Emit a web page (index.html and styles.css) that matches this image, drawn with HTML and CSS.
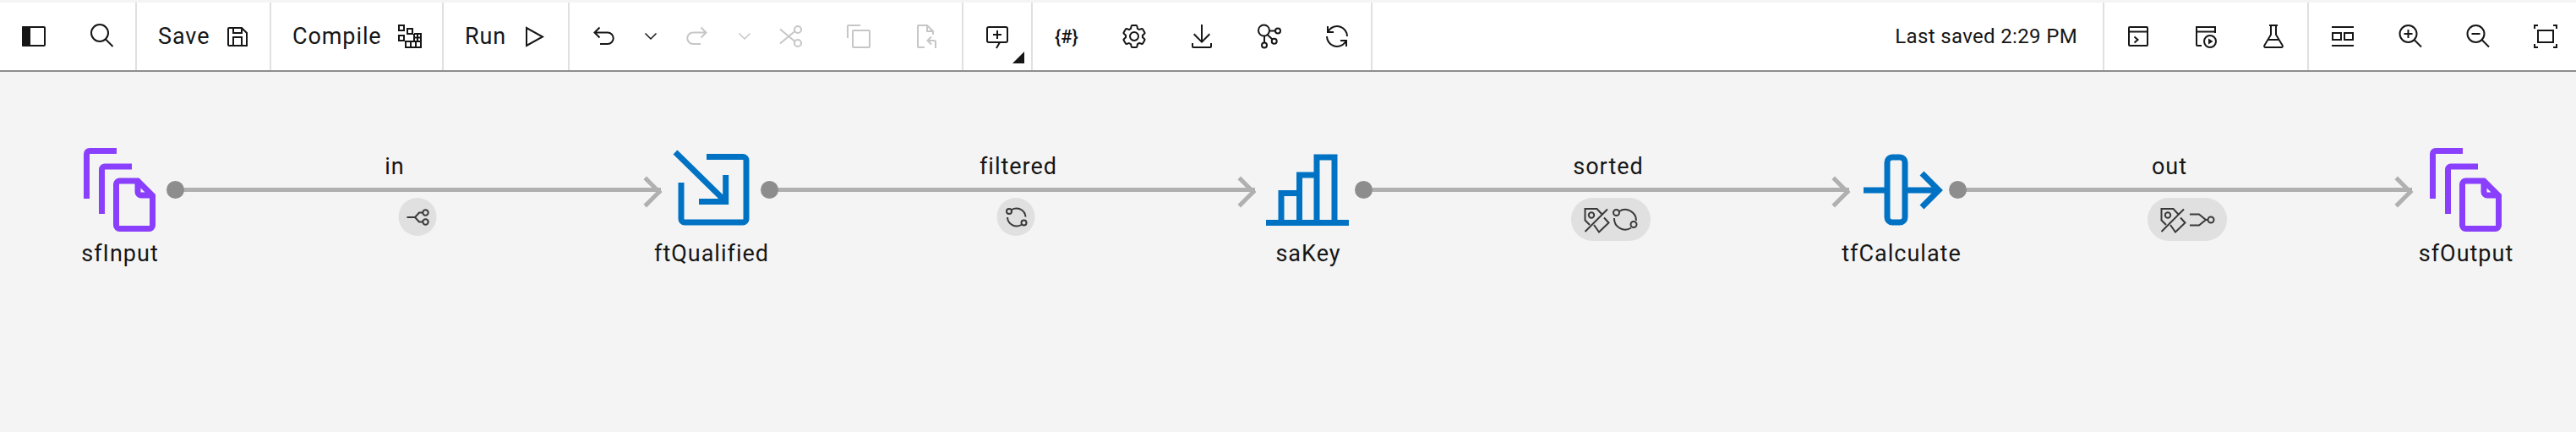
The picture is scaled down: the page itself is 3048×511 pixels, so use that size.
FILE: index.html
```html
<!DOCTYPE html>
<html lang="en">
<head>
  <meta charset="UTF-8" />
  <title>Flow canvas</title>
  <link rel="stylesheet" href="styles.css">
</head>
<body>
  <div class="toolbar">
    <div class="group g-side">
      <button class="tool"><svg viewBox="0 0 32 32"><rect x="3" y="5" width="26" height="22" rx="1"/><path class="solid" d="M3 4h9v24H3a1 1 0 0 1-1-1V5a1 1 0 0 1 1-1z"/></svg></button>
      <button class="tool"><svg viewBox="0 0 32 32"><circle cx="14" cy="12" r="10"/><path d="m21 19.500 8.500 8.500"/></svg></button>
    </div>
    <div class="group g-save">
      <button class="tool text">Save <svg viewBox="0 0 32 32"><path d="M6 6h15l6 6v15H6a1 1 0 0 1-1-1V7a1 1 0 0 1 1-1z"/><path d="M11 6v6h10V6M11 27V17h10v10"/></svg></button>
    </div>
    <div class="group g-compile">
      <button class="tool text">Compile <svg viewBox="0 0 32 32"><path d="M3 3h6v6H3zM13 7h6v6h-6zM3 15h6v6H3zM11 22h18v7H11zM21 13h8v9M17 22v7M23 22v7M25 13v9M21 13v9M21 17.500h8"/></svg></button>
    </div>
    <div class="group g-run">
      <button class="tool text">Run <svg viewBox="0 0 32 32"><path d="M7 6v21l19-10.500z"/></svg></button>
    </div>
    <div class="group g-edit">
      <button class="tool"><svg viewBox="0 0 32 32"><path d="M6 11.500h15a6.750 6.750 0 0 1 0 13.500h-9M11.500 5.500l-6 6 6 6"/></svg></button>
      <button class="caret"><svg viewBox="0 0 16 16"><path d="M1.500 4.500 8 11l6.500-6.500"/></svg></button>
      <button class="tool off"><svg viewBox="0 0 32 32"><path d="M26 11.500H11a6.750 6.750 0 0 0 0 13.500h9M20.500 5.500l6 6-6 6"/></svg></button>
      <button class="caret off"><svg viewBox="0 0 16 16"><path d="M1.500 4.500 8 11l6.500-6.500"/></svg></button>
      <button class="tool off"><svg viewBox="0 0 32 32"><circle cx="24" cy="8" r="4"/><circle cx="24" cy="24" r="4"/><path d="M3 7.500 20.500 22M3 24.500 20.500 10"/></svg></button>
      <button class="tool off"><svg viewBox="0 0 32 32"><rect x="9" y="9" width="20" height="20" rx="1"/><path d="M3 18V4a1 1 0 0 1 1-1h14"/></svg></button>
      <button class="tool off"><svg viewBox="0 0 32 32"><path d="M14 29H7a1 1 0 0 1-1-1V4a1 1 0 0 1 1-1h10l7 7v4M17 3v7h7M27 30v-7a2 2 0 0 0-2-2h-7M22 16.500 17.500 21l4.500 4.500"/></svg></button>
    </div>
    <div class="group g-note">
      <button class="tool"><svg viewBox="0 0 32 32"><path d="M19 23h7a2 2 0 0 0 2-2V7a2 2 0 0 0-2-2H6a2 2 0 0 0-2 2v14a2 2 0 0 0 2 2h13l-4 7M16 9v10M11 14h10"/></svg></button>
      <span class="corner"></span>
    </div>
    <div class="group g-more">
      <button class="tool"><span class="hash">{#}</span></button>
      <button class="tool"><svg class="solid" viewBox="0 0 32 32"><path d="M27 16.760c0-.25 0-.5 0-.76s0-.51 0-.77l1.920-1.680A2 2 0 0 0 29.300 11l-2.360-4a2 2 0 0 0-1.730-1 2 2 0 0 0-.64.1l-2.430.82a11.350 11.350 0 0 0-1.310-.75l-.51-2.520a2 2 0 0 0-2-1.610h-4.680a2 2 0 0 0-2 1.610l-.51 2.520a11.480 11.480 0 0 0-1.320.75l-2.380-.86A2 2 0 0 0 6.790 6a2 2 0 0 0-1.730 1L2.700 11a2 2 0 0 0 .41 2.510L5 15.240c0 .25 0 .5 0 .76s0 .51 0 .77l-1.890 1.680A2 2 0 0 0 2.700 21l2.360 4a2 2 0 0 0 1.730 1 2 2 0 0 0 .64-.1l2.430-.82a11.350 11.350 0 0 0 1.310.75l.51 2.520a2 2 0 0 0 2 1.610h4.720a2 2 0 0 0 2-1.610l.51-2.520a11.480 11.480 0 0 0 1.320-.75l2.420.82a2 2 0 0 0 .64.1 2 2 0 0 0 1.730-1l2.280-4a2 2 0 0 0-.41-2.510ZM25.210 24l-3.430-1.160a8.860 8.860 0 0 1-2.710 1.570L18.360 28h-4.720l-.71-3.550a9.360 9.360 0 0 1-2.700-1.570L6.790 24l-2.360-4 2.720-2.400a8.900 8.900 0 0 1 0-3.130L4.430 12l2.360-4 3.430 1.160a8.860 8.860 0 0 1 2.710-1.570L13.640 4h4.720l.71 3.550a9.360 9.360 0 0 1 2.700 1.570L25.210 8l2.360 4-2.720 2.400a8.900 8.900 0 0 1 0 3.130L27.570 20Z"/><path d="M16 22a6 6 0 1 1 6-6 5.940 5.940 0 0 1-6 6Zm0-10a3.910 3.910 0 0 0-4 4 3.910 3.910 0 0 0 4 4 3.910 3.910 0 0 0 4-4 3.910 3.910 0 0 0-4-4Z"/></svg></button>
      <button class="tool"><svg class="solid" viewBox="0 0 32 32"><path d="M26 24v4H6v-4H4v4a2 2 0 0 0 2 2h20a2 2 0 0 0 2-2v-4z"/><path d="m26 14-1.410-1.410L17 20.170V2h-2v18.170l-7.590-7.580L6 14l10 10 10-10z"/></svg></button>
      <button class="tool"><svg viewBox="0 0 32 32"><circle cx="9.500" cy="9" r="6.500"/><circle cx="26" cy="9.500" r="3"/><circle cx="21.700" cy="21.700" r="3"/><circle cx="10" cy="26.500" r="3"/><path d="M16 9.500h7M13.500 14l6 5.500M10 15.500v8"/></svg></button>
      <button class="tool"><svg class="solid" viewBox="0 0 32 32"><path d="M12 10H6.780A11 11 0 0 1 27 16h2A13 13 0 0 0 6 7.680V4H4v8h8zM20 22h5.220A11 11 0 0 1 5 16H3a13 13 0 0 0 23 8.320V28h2v-8h-8z"/></svg></button>
    </div>
    <div class="status">Last saved 2:29 PM</div>
    <div class="group g-panel">
      <button class="tool"><svg viewBox="0 0 32 32"><rect x="5" y="5" width="22" height="22" rx="1"/><path d="M5 10.500h22M11.500 16.500l4 3.500-4 3.500"/></svg></button>
      <button class="tool"><svg viewBox="0 0 32 32"><path d="M11 27H6a1 1 0 0 1-1-1V5h22v7M5 10.500h22"/><circle cx="21" cy="22" r="7"/><path class="solid" d="m19 18.500 5.500 3.500-5.500 3.500z"/></svg></button>
      <button class="tool"><svg viewBox="0 0 32 32"><path d="M11 3h10M13 3v11L5.500 26.500A1.500 1.500 0 0 0 7 29h18a1.500 1.500 0 0 0 1.500-2.500L19 14V3M9.500 20h13"/></svg></button>
    </div>
    <div class="group g-view">
      <button class="tool"><svg viewBox="0 0 32 32"><path d="M3 5h26M3 27h26M4 12h10v8H4zM18 12h10v8H18z"/></svg></button>
      <button class="tool"><svg viewBox="0 0 32 32"><circle cx="13.500" cy="13" r="10"/><path d="m20.500 20 8.500 8.500M13.500 8v10M8.500 13h10"/></svg></button>
      <button class="tool"><svg viewBox="0 0 32 32"><circle cx="13.500" cy="13" r="10"/><path d="m20.500 20 8.500 8.500M8.500 13h10"/></svg></button>
      <button class="tool"><svg viewBox="0 0 32 32"><path d="M3 7V3h4M25 3h4v4M3 25v4h4M25 29h4v-4M7 9h18v14H7z"/></svg></button>
    </div>
  </div>

  <div class="canvas">
    <div class="link link-in">
      <span class="link-label">in</span>
      <span class="badge"><svg viewBox="0 0 32 32"><path d="M3 16h9.500l5-5.500h4M12.500 16l5 5.500h4"/><circle cx="25" cy="10.500" r="3.200"/><circle cx="25" cy="21.500" r="3.200"/></svg></span>
    </div>
    <div class="link link-filtered">
      <span class="link-label">filtered</span>
      <span class="badge"><svg viewBox="0 0 32 32"><circle cx="7.500" cy="9" r="3"/><circle cx="25" cy="22.500" r="3"/><path d="M10.500 7A11 11 0 0 1 27 15.500M22 25a11 11 0 0 1-16.500-9"/></svg></span>
    </div>
    <div class="link link-sorted">
      <span class="link-label">sorted</span>
      <span class="badge wide"><svg viewBox="0 0 32 32"><path d="M23 10 16.500 3H2.500v13.500L8 22M2.500 30 29 3.500M13 22l6 8.500 11.500-11L25 13.500"/><circle cx="10" cy="10.500" r="3.200"/></svg><svg viewBox="0 0 32 32"><circle cx="5.500" cy="7.500" r="3.500"/><circle cx="26" cy="21.500" r="3.500"/><path d="M9 6a13 13 0 0 1 20 11M23 25.500A13 13 0 0 1 3 14"/></svg></span>
    </div>
    <div class="link link-out">
      <span class="link-label">out</span>
      <span class="badge wide"><svg viewBox="0 0 32 32"><path d="M23 10 16.500 3H2.500v13.500L8 22M2.500 30 29 3.500M13 22l6 8.500 11.500-11L25 13.500"/><circle cx="10" cy="10.500" r="3.200"/></svg><svg viewBox="0 0 32 32"><path d="M2 9.500h11l8 6.500-8 6.500H2M21 16h2.500"/><circle cx="27" cy="16" r="3.500"/></svg></span>
    </div>

    <div class="node node-input">
      <svg class="node-icon purple" viewBox="0 0 100 100"><path d="M10.500 61V8a3.500 3.500 0 0 1 3.500-3.500h32M28.500 79V26.500a3.500 3.500 0 0 1 3.500-3.500h32M45.500 44a4 4 0 0 1 4-4H71L88.500 57.500v35a4 4 0 0 1-4 4h-35a4 4 0 0 1-4-4zM71 40v13a4 4 0 0 0 4 4h13.500"/></svg>
      <span class="node-label">sfInput</span>
    </div>
    <div class="node node-filter">
      <svg class="node-icon blue" viewBox="0 0 100 100"><path d="M44 11.500h43a4 4 0 0 1 4 4V85a4 4 0 0 1-4 4H18a4 4 0 0 1-4-4V42M7 6l59.700 58.500M35 64.500h31.700V33"/></svg>
      <span class="node-label">ftQualified</span>
    </div>
    <div class="node node-sort">
      <svg class="node-icon blue" viewBox="0 0 100 100"><path d="M0 89.500h98M18 89.500v-35h21.500M39.500 89.500V33H60M60 89.500V12h21v77.500"/></svg>
      <span class="node-label">saKey</span>
    </div>
    <div class="node node-calc">
      <svg class="node-icon blue" viewBox="0 0 100 100"><rect x="33" y="12" width="21" height="77" rx="6"/><path d="M5 51h28M54 51h41M74 31l20 20-20 20"/></svg>
      <span class="node-label">tfCalculate</span>
    </div>
    <div class="node node-output">
      <svg class="node-icon purple" viewBox="0 0 100 100"><path d="M10.500 61V8a3.500 3.500 0 0 1 3.500-3.500h32M28.500 79V26.500a3.500 3.500 0 0 1 3.500-3.500h32M45.500 44a4 4 0 0 1 4-4H71L88.500 57.500v35a4 4 0 0 1-4 4h-35a4 4 0 0 1-4-4zM71 40v13a4 4 0 0 0 4 4h13.500"/></svg>
      <span class="node-label">sfOutput</span>
    </div>
  </div>
</body>
</html>
```

FILE: styles.css
```css
* { box-sizing: border-box; }

html, body { height: 100%; }

body {
  margin: 0;
  padding-top: 3px;
  display: flex;
  flex-direction: column;
  overflow: hidden;
  background: #f4f4f4;
  color: #161616;
  font-family: Roboto, "Noto Sans", sans-serif;
}

/* toolbar */
.toolbar {
  display: flex;
  align-items: stretch;
  flex: none;
  height: 82px;
  background: #fff;
  border-bottom: 2px solid #8d8d8d;
}

.group {
  position: relative;
  display: flex;
  align-items: center;
  flex: none;
  border-right: 2px solid #e0e0e0;
}

.g-side { width: 162px; }
.g-save { width: 159px; padding-left: 25px; }
.g-compile { width: 204px; padding-left: 25px; }
.g-run { width: 149px; padding-left: 25px; }
.g-edit { width: 466px; }
.g-note { width: 82px; }
.g-more { width: 402px; }
.g-panel { width: 242px; }
.g-view { width: 316px; border-right: 0; }

.status {
  flex: 1;
  display: flex;
  align-items: center;
  justify-content: flex-end;
  padding-right: 30px;
  font-size: 24px;
  letter-spacing: 0.35px;
  border-right: 2px solid #e0e0e0;
}

.tool, .caret {
  display: flex;
  align-items: center;
  justify-content: center;
  flex: none;
  height: 48px;
  padding: 0;
  border: 0;
  background: none;
  color: inherit;
  font: inherit;
}

.tool { width: 80px; }
.tool.text { width: auto; gap: 17px; font-size: 27px; letter-spacing: 0.9px; }
.caret { width: 31px; }
.off { color: #c6c6c6; }

.tool svg { width: 32px; height: 32px; }
.caret svg { width: 16px; height: 16px; }

.tool svg, .caret svg, .badge svg {
  fill: none;
  stroke: currentColor;
  stroke-width: 2;
}

.caret svg { stroke-width: 1.5; }

.tool svg.solid, .tool svg .solid {
  fill: currentColor;
  stroke: none;
}

.hash {
  font-size: 22px;
  font-weight: 500;
}

.corner {
  position: absolute;
  right: 8px;
  bottom: 8px;
  width: 0;
  height: 0;
  border-left: 14px solid transparent;
  border-bottom: 14px solid #161616;
}

/* diagram */
.canvas {
  position: relative;
  flex: 1;
}

.node {
  position: absolute;
  top: 89px;
  width: 160px;
  display: flex;
  flex-direction: column;
  align-items: center;
}

.node-input { left: 62px; }
.node-filter { left: 762px; }
.node-sort { left: 1468px; }
.node-calc { left: 2170px; }
.node-output { left: 2838px; }

.node-icon {
  width: 100px;
  height: 100px;
  overflow: visible;
  fill: none;
  stroke-width: 7;
}

.purple { stroke: #8a3ffc; }
.blue { stroke: #0072c3; }

.node-label {
  margin-top: 10px;
  font-size: 27px;
  line-height: 32px;
  letter-spacing: 1px;
  white-space: nowrap;
}

.link {
  position: absolute;
  top: 137px;
  height: 5px;
  background: #b0b0b0;
}

/* port */
.link::before {
  content: "";
  position: absolute;
  left: -10px;
  top: -8px;
  width: 21px;
  height: 21px;
  border-radius: 50%;
  background: #8d8d8d;
}

/* arrow head */
.link::after {
  content: "";
  position: absolute;
  right: 4px;
  top: -8px;
  width: 21px;
  height: 21px;
  border-top: 5px solid #b0b0b0;
  border-right: 5px solid #b0b0b0;
  transform: rotate(45deg);
}

.link-in { left: 207px; width: 575px; }
.link-filtered { left: 910px; width: 575px; }
.link-sorted { left: 1613px; width: 575px; }
.link-out { left: 2316px; width: 538px; }

.link-label, .badge {
  position: absolute;
  transform: translateX(-50%);
}

.link-label {
  top: -41px;
  font-size: 27px;
  line-height: 32px;
  letter-spacing: 1px;
}

.badge {
  top: 12px;
  display: flex;
  gap: 2px;
  padding: 6.5px;
  border-radius: 26px;
  background: #e0e0e0;
  color: #393939;
}

.badge.wide { padding: 9.5px 14px; }
.badge svg { width: 32px; height: 32px; }

.link-in .link-label { left: 260px; }
.link-in .badge { left: 287px; }
.link-filtered .link-label { left: 295px; }
.link-filtered .badge { left: 292px; }
.link-sorted .link-label { left: 290px; }
.link-sorted .badge { left: 293px; }
.link-out .link-label { left: 251px; }
.link-out .badge { left: 272px; }
```
